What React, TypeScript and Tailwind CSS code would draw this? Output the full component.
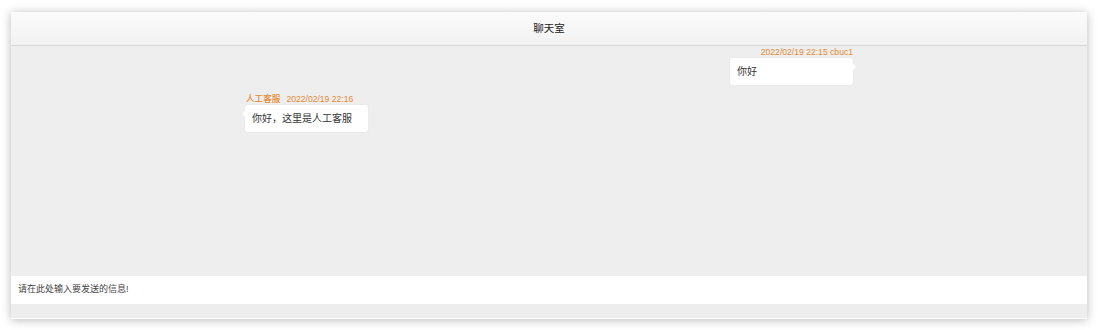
const font = '[font-family:"Liberation_Sans","Noto_Sans_CJK_SC",sans-serif]'

const messages = [
  { id: 1, mine: true, name: 'cbuc1', time: '2022/02/19 22:15', text: '你好' },
  { id: 2, mine: false, name: '人工客服', time: '2022/02/19 22:16', text: '你好，这里是人工客服' },
]

function Bubble({ mine, text }: { mine: boolean; text: string }) {
  return (
    <div className="relative h-[27px] w-[123px] rounded-[2px] bg-white pl-[7px] shadow-[0_0_1px_rgba(0,0,0,0.12)] flex items-center">
      <span className="text-[10px] text-[#333]">{text}</span>
      {mine ? (
        <span className="absolute right-[-3px] top-[6px] h-0 w-0 border-y-[3px] border-l-[3px] border-y-transparent border-l-white" />
      ) : (
        <span className="absolute left-[-3px] top-[6px] h-0 w-0 border-y-[3px] border-r-[3px] border-y-transparent border-r-white" />
      )}
    </div>
  )
}

export default function App() {
  return (
    <div className={`h-[330px] w-[1098px] bg-white pl-[11px] pr-[11px] pt-[12px] ${font}`}>
      <div className="flex h-[307px] w-[1076px] flex-col shadow-[0_1px_9px_rgba(0,0,0,0.28)]">
        {/* header */}
        <div className="flex h-[34px] shrink-0 items-center justify-center border-b border-[#d8d8d8] bg-gradient-to-b from-[#fbfbfb] to-[#f2f2f2]">
          <span className="text-[10.5px] text-[#222]">聊天室</span>
        </div>

        {/* messages */}
        <div className="flex h-[230px] shrink-0 flex-col bg-[#eeeeee] px-[234px]">
          {messages.map((m, i) =>
            m.mine ? (
              <div key={m.id} className={`flex flex-col items-end ${i > 0 ? 'mt-[7px]' : ''}`}>
                <div className="h-[12px] text-[8.6px] font-medium leading-[12px] text-[#e48a33]">
                  {m.time} {m.name}
                </div>
                <div className="h-[28px] flex">
                  <Bubble mine text={m.text} />
                </div>
              </div>
            ) : (
              <div key={m.id} className={`flex flex-col items-start ${i > 0 ? 'mt-[7px]' : ''}`}>
                <div className="h-[12px] pl-[1px] text-[8.6px] font-medium leading-[12px] text-[#e48a33]">
                  {m.name}
                  <span className="ml-[6px]">{m.time}</span>
                </div>
                <Bubble mine={false} text={m.text} />
              </div>
            ),
          )}
        </div>

        {/* input */}
        <div className="flex h-[28px] shrink-0 items-center bg-white pl-[7px]">
          <span className="text-[9px] text-[#444]">请在此处输入要发送的信息!</span>
        </div>
        <div className="h-[14px] shrink-0 bg-[#ededed]" />
      </div>
    </div>
  )
}
